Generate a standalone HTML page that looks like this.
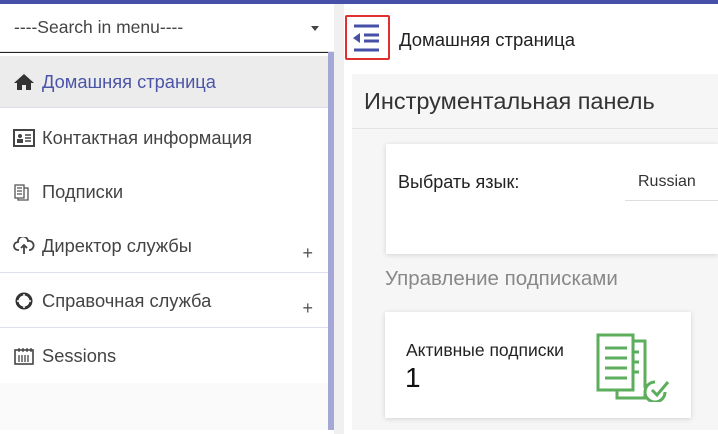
<!DOCTYPE html>
<html><head><meta charset="utf-8"><style>
*{margin:0;padding:0;box-sizing:border-box}
body{width:718px;height:430px;overflow:hidden;background:#fff;font-family:"Liberation Sans","Noto Sans CJK SC",sans-serif;position:relative;color:#333}
.abs{position:absolute;white-space:nowrap}
.item{position:absolute;left:0;width:328px;height:54px;font-size:18.3px;color:#444;display:flex;align-items:center;padding-left:13px}
.item svg{margin-right:7px}
.plus{position:absolute;right:15px;top:24px;font-size:18px;color:#555}
</style></head><body>
<div class="abs" style="left:0;top:0;width:718px;height:4px;background:#4650a8"></div>
<div class="abs" style="left:0;top:4px;width:336px;height:48px;background:#fff;border-bottom:1px solid #e6e6e6"></div>
<div class="abs" style="left:14px;top:17px;font-size:17.5px;color:#444">----Search in menu----</div>
<div class="abs" style="left:311px;top:26px;width:0;height:0;border-left:4px solid transparent;border-right:4px solid transparent;border-top:5px solid #444"></div>
<div class="abs" style="left:0;top:52px;width:336px;height:378px;background:#fafafa"></div>
<div class="abs" style="left:0;top:52px;width:328px;height:331px;background:#fff"></div>
<div class="abs" style="left:0;top:52px;width:330px;height:1px;background:#222"></div>
<div class="abs" style="left:328px;top:52px;width:6px;height:378px;background:#a5a8d6"></div>
<div class="abs" style="left:334px;top:4px;width:10px;height:430px;background:#f0f0f0"></div>
<div class="item" style="top:56px;height:52px;background:#ececec;color:#4b55a8;border-bottom:1px solid #dde"><svg width="22" height="18" viewBox="0 0 22 18"><path d="M11 1 L1 10 H4 V17 H9 V12 H13 V17 H18 V10 H21 Z" fill="#333"/></svg>Домашняя страница</div>
<div class="item" style="top:111px"><svg width="22" height="18" viewBox="0 0 22 18"><rect x="1" y="1" width="20" height="16" fill="none" stroke="#444" stroke-width="2"/><circle cx="7" cy="7" r="2" fill="#444"/><rect x="4" y="10" width="6" height="4" fill="#444"/><path d="M12 6h6M12 9h6M12 12h6" stroke="#444" stroke-width="1.4"/></svg>Контактная информация</div>
<div class="item" style="top:165px"><svg width="22" height="18" viewBox="0 0 22 18"><path d="M2 2h9v13H2zM11 5h4v12H5v-2M4 5h5M4 8h5M4 11h5" fill="none" stroke="#555" stroke-width="1.3"/></svg>Подписки</div>
<div class="item" style="top:219px"><svg width="22" height="18" viewBox="0 0 22 18"><path d="M6 13H5a4 4 0 0 1 0-8 5 5 0 0 1 10-1 4 4 0 0 1 2 9h-1M11 8v9M8 11l3-3 3 3" fill="none" stroke="#444" stroke-width="1.8"/></svg>Директор службы<span class="plus">+</span></div>
<div class="abs" style="left:0;top:272px;width:328px;height:1px;background:#dde0ee"></div>
<div class="item" style="top:274px"><svg width="22" height="18" viewBox="0 0 22 18"><circle cx="11" cy="9" r="7" fill="none" stroke="#333" stroke-width="3"/><path d="M11 2v4M11 12v4M4 9h4M14 9h4" stroke="#fff" stroke-width="1.5"/></svg>Справочная служба<span class="plus">+</span></div>
<div class="abs" style="left:0;top:327px;width:328px;height:1px;background:#dde0ee"></div>
<div class="item" style="top:329px"><svg width="22" height="18" viewBox="0 0 22 18"><rect x="2" y="3" width="18" height="14" fill="none" stroke="#444" stroke-width="1.6"/><path d="M6 1v4M10 1v4M14 1v4M18 1v4M6 8v7M9 8v7M12 8v7M15 8v7" stroke="#444" stroke-width="1.3"/></svg>Sessions</div>
<div class="abs" style="left:345px;top:15px;width:45px;height:45px;border:2px solid #e02f2f;border-radius:2px"></div>
<svg class="abs" style="left:351px;top:24px" width="32" height="28" viewBox="0 0 32 28"><path d="M3 2H28M13 11H28M13 17H28M3 26H28" stroke="#4650a8" stroke-width="3"/><path d="M2 14L9 9V19Z" fill="#4650a8"/></svg>
<div class="abs" style="left:399px;top:29px;font-size:18.5px;color:#222">Домашняя страница</div>
<div class="abs" style="left:352px;top:74px;width:366px;height:356px;background:#f6f6f6"></div>
<div class="abs" style="left:352px;top:128px;width:366px;height:1px;background:#e3e3e3"></div>
<div class="abs" style="left:364px;top:88px;font-size:23.5px;color:#333">Инструментальная панель</div>
<div class="abs" style="left:386px;top:144px;width:332px;height:110px;background:#fff;box-shadow:0 1px 5px rgba(0,0,0,.15)"></div>
<div class="abs" style="left:398px;top:172px;font-size:18px;color:#222">Выбрать язык:</div>
<div class="abs" style="left:638px;top:173px;font-size:16px;color:#333">Russian</div>
<div class="abs" style="left:625px;top:200px;width:93px;height:1px;background:#ddd"></div>
<div class="abs" style="left:385px;top:267px;font-size:20.5px;color:#888">Управление подписками</div>
<div class="abs" style="left:385px;top:312px;width:306px;height:106px;background:#fff;box-shadow:0 1px 5px rgba(0,0,0,.15)"></div>
<div class="abs" style="left:406px;top:340px;font-size:17.5px;color:#222">Активные подписки</div>
<div class="abs" style="left:405px;top:362px;font-size:28px;color:#111">1</div>
<svg class="abs" style="left:595px;top:332px" width="85" height="70" viewBox="0 0 85 70"><g fill="none" stroke="#5cae5c" stroke-width="3"><path d="M22 58V66H50V62"/><path d="M38 9H50V56"/><rect x="3" y="3" width="35" height="55"/><path d="M10 16H32M10 26H32M10 36H32M10 46H32"/><path d="M38 20H44M38 30H44M38 40H44"/><path d="M60 50a10 10 0 1 0 10 10"/><path d="M57 58l5 5 11-13"/></g></svg>
</body></html>
